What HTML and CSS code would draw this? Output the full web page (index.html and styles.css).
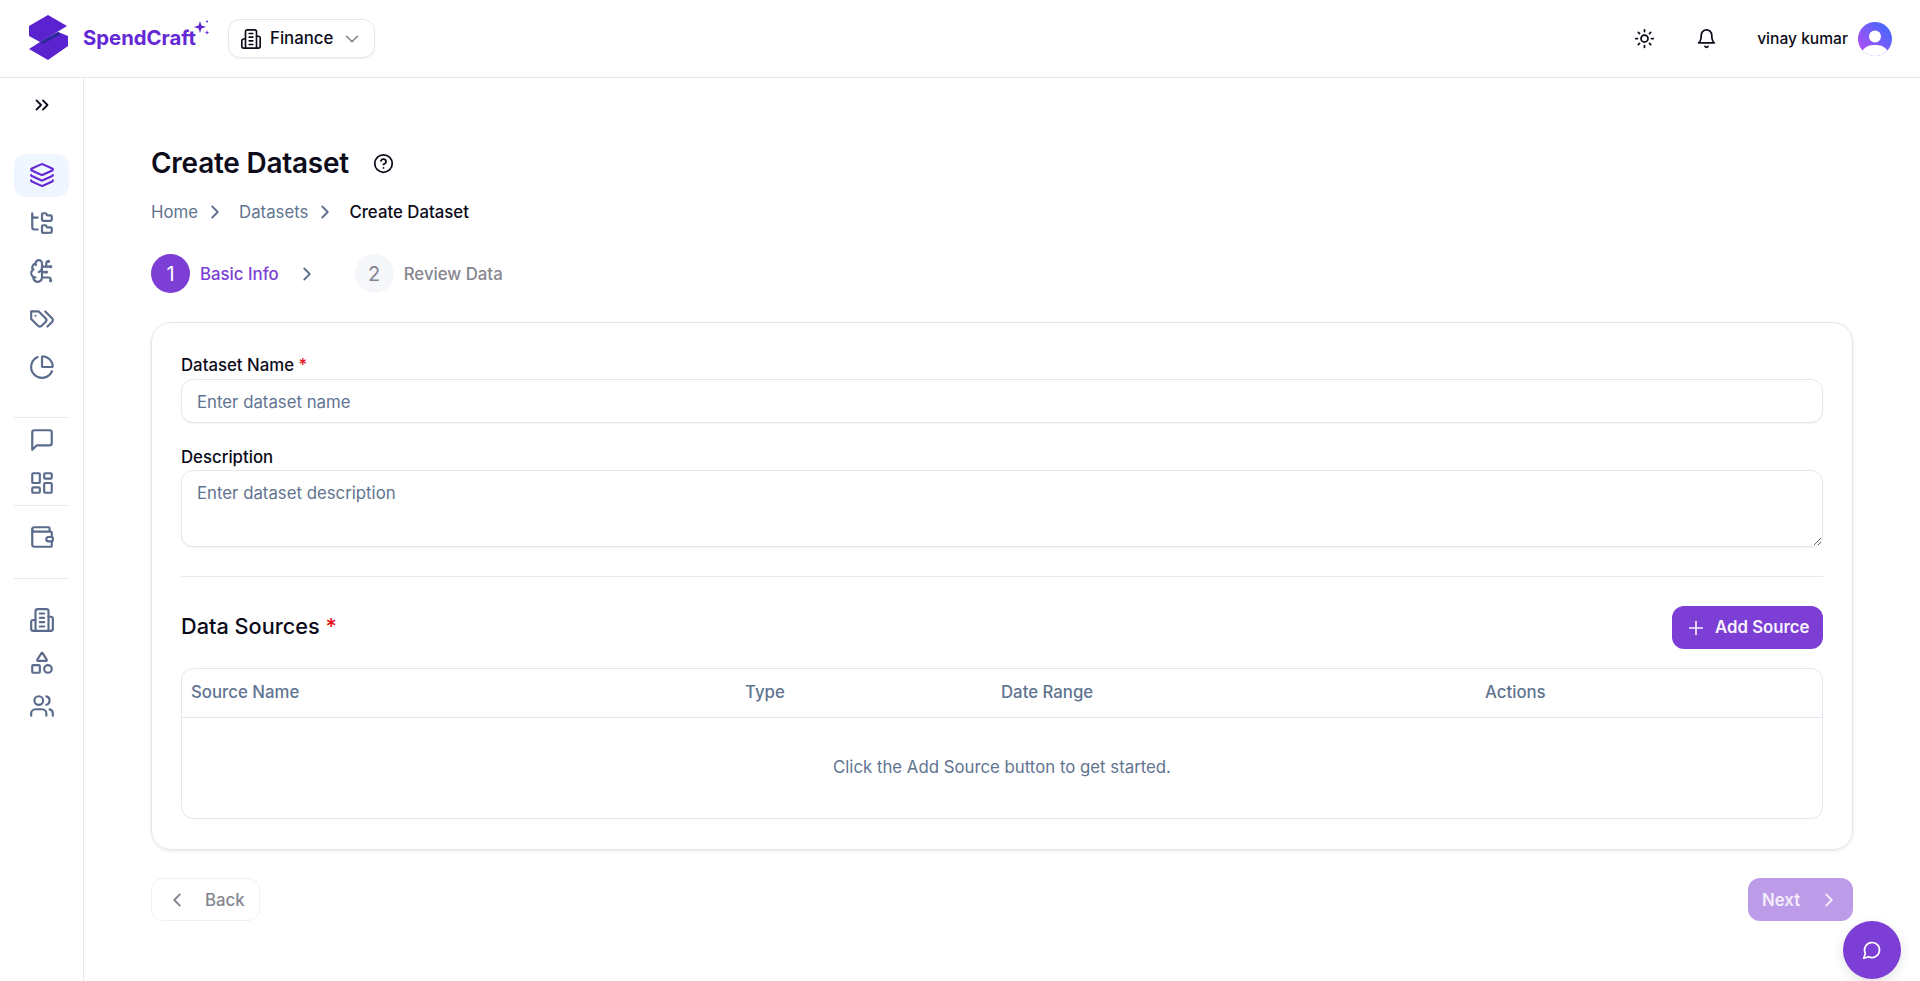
FILE: index.html
```html
<!DOCTYPE html>
<html lang="en">
<head>
<meta charset="utf-8">
<title>Create Dataset</title>
<link rel="stylesheet" href="styles.css">
</head>
<body>
<header class="topbar">
  <div class="brand">
    <svg class="logo" viewBox="0 0 44 50" width="44" height="50">
      <path fill="#5b22cf" d="M1 12 20 1 39 12 21 23 12 28 1 22Z"/>
      <path fill="#5b22cf" d="M40 22V32L20 46 1 35 12 28 30 18Z"/>
      <path fill="#2b2a9c" d="M12 28 30 18 33 20 15 30Z"/>
    </svg>
    <span class="brand-name">SpendCraft</span>
    <svg class="sparkle" viewBox="0 0 16 16" width="16" height="16">
      <path fill="#5b22cf" d="M6 1 7.400 5.600 12 7 7.400 8.400 6 13 4.600 8.400 0 7 4.600 5.600Z"/>
      <circle fill="#5b22cf" cx="13" cy="1.500" r="1"/>
      <path fill="#5b22cf" d="M13 10 13.600 12 15.500 12.500 13.600 13 13 15 12.400 13 10.500 12.500 12.400 12Z"/>
    </svg>
  </div>
  <button class="org-select">
    <svg class="ico-22 thin" viewBox="0 0 24 24"><path d="M6 22V4a2 2 0 0 1 2-2h8a2 2 0 0 1 2 2v18Z"/><path d="M6 12H4a2 2 0 0 0-2 2v6a2 2 0 0 0 2 2h2"/><path d="M18 9h2a2 2 0 0 1 2 2v9a2 2 0 0 1-2 2h-2"/><path d="M10 6h4M10 10h4M10 14h4M10 18h4"/></svg>
    <span class="org-name">Finance</span>
    <svg class="ico-22 org-caret" viewBox="0 0 24 24"><path d="m6 9 6 6 6-6"/></svg>
  </button>
  <div class="top-actions">
    <svg class="ico-21" viewBox="0 0 24 24"><circle cx="12" cy="12" r="4"/><path d="M12 2v2M12 20v2M4.930 4.930l1.410 1.410M17.660 17.660l1.410 1.410M2 12h2M20 12h2M6.340 17.660l-1.410 1.410M19.070 4.930l-1.410 1.410"/></svg>
    <svg class="ico-21 action-bell" viewBox="0 0 24 24"><path d="M6 8a6 6 0 0 1 12 0c0 7 3 9 3 9H3s3-2 3-9"/><path d="M10.300 21a1.940 1.940 0 0 0 3.400 0"/></svg>
    <span class="user-name">vinay kumar</span>
    <span class="avatar">
      <svg viewBox="0 0 34 34" width="34" height="34">
        <defs><linearGradient id="av" x1="0" y1="1" x2="1" y2="0"><stop offset="0.15" stop-color="#ab4ff5"/><stop offset="0.8" stop-color="#4f66fb"/></linearGradient></defs>
        <circle cx="17" cy="17" r="17" fill="url(#av)"/>
        <circle cx="17" cy="14.500" r="6" fill="#fff"/>
        <path fill="#fff" d="M4.500 28.500C8 24 12 23 17 23s9 1 12.500 5.500A17 17 0 0 1 17 34 17 17 0 0 1 4.500 28.500Z"/>
      </svg>
    </span>
  </div>
</header>

<div class="shell">
  <nav class="sidebar">
    <div class="expand">
      <svg class="ico-22 dark" viewBox="0 0 24 24"><path d="m6 17 5-5-5-5M13 17l5-5-5-5"/></svg>
    </div>
    <div class="nav-group group-main">
      <a class="nav-item active"><svg class="ico-26" viewBox="0 0 24 24"><path d="M12.830 2.180a2 2 0 0 0-1.660 0L2.600 6.080a1 1 0 0 0 0 1.830l8.580 3.910a2 2 0 0 0 1.660 0l8.580-3.900a1 1 0 0 0 0-1.830z"/><path d="M2 12a1 1 0 0 0 .580.910l8.600 3.910a2 2 0 0 0 1.650 0l8.580-3.900A1 1 0 0 0 22 12"/><path d="M2 17a1 1 0 0 0 .580.910l8.600 3.910a2 2 0 0 0 1.650 0l8.580-3.900A1 1 0 0 0 22 17"/></svg></a>
      <a class="nav-item"><svg class="ico-26" viewBox="0 0 24 24"><path d="M20 10a1 1 0 0 0 1-1V6a1 1 0 0 0-1-1h-2.500a1 1 0 0 1-.800-.400l-.900-1.200A1 1 0 0 0 15 3h-2a1 1 0 0 0-1 1v5a1 1 0 0 0 1 1Z"/><path d="M20 21a1 1 0 0 0 1-1v-3a1 1 0 0 0-1-1h-2.900a1 1 0 0 1-.880-.550l-.420-.850a1 1 0 0 0-.880-.550H13a1 1 0 0 0-1 1v5a1 1 0 0 0 1 1Z"/><path d="M3 5a2 2 0 0 0 2 2h3"/><path d="M3 3v13a2 2 0 0 0 2 2h3"/></svg></a>
      <a class="nav-item"><svg class="ico-26" viewBox="0 0 24 24"><path d="M12 5a3 3 0 1 0-5.997.125 4 4 0 0 0-2.526 5.770 4 4 0 0 0 .556 6.588A4 4 0 1 0 12 18Z"/><path d="M9 13a4.500 4.500 0 0 0 3-4"/><path d="M6.003 5.125A3 3 0 0 0 6.401 6.500"/><path d="M3.477 10.896a4 4 0 0 1 .585-.396"/><path d="M6 18a4 4 0 0 1-1.967-.516"/><path d="M12 13h4"/><path d="M12 18h6a2 2 0 0 1 2 2v1"/><path d="M12 8h8"/><path d="M16 8V5a2 2 0 0 1 2-2"/><circle cx="16" cy="13" r=".5"/><circle cx="18" cy="3" r=".5"/><circle cx="20" cy="21" r=".5"/><circle cx="20" cy="8" r=".5"/></svg></a>
      <a class="nav-item"><svg class="ico-26" viewBox="0 0 24 24"><path d="M9 5H2v7l6.290 6.290c.940.940 2.480.940 3.420 0l3.580-3.580c.940-.940.940-2.480 0-3.420L9 5Z"/><path d="M6 9.010V9"/><path d="m15 5 6.300 6.300a2.400 2.400 0 0 1 0 3.400L17 19"/></svg></a>
      <a class="nav-item"><svg class="ico-26" viewBox="0 0 24 24"><path d="M21 12c.552 0 1.005-.449.950-.998a10 10 0 0 0-8.953-8.951c-.550-.055-.998.398-.998.950v8a1 1 0 0 0 1 1z"/><path d="M21.210 15.890A10 10 0 1 1 8 2.830"/></svg></a>
    </div>
    <div class="nav-rule rule-a"></div>
    <div class="nav-group">
      <a class="nav-item"><svg class="ico-26" viewBox="0 0 24 24"><path d="M21 15a2 2 0 0 1-2 2H7l-4 4V5a2 2 0 0 1 2-2h14a2 2 0 0 1 2 2z"/></svg></a>
      <a class="nav-item"><svg class="ico-26" viewBox="0 0 24 24"><rect x="3" y="3" width="7" height="9" rx="1"/><rect x="14" y="3" width="7" height="5" rx="1"/><rect x="14" y="12" width="7" height="9" rx="1"/><rect x="3" y="16" width="7" height="5" rx="1"/></svg></a>
    </div>
    <div class="nav-rule rule-b"></div>
    <div class="nav-group">
      <a class="nav-item"><svg class="ico-26" viewBox="0 0 24 24"><path d="M19 7V4a1 1 0 0 0-1-1H5a2 2 0 0 0 0 4h15a1 1 0 0 1 1 1v4h-3a2 2 0 0 0 0 4h3a1 1 0 0 0 1-1v-2a1 1 0 0 0-1-1"/><path d="M3 5v14a2 2 0 0 0 2 2h15a1 1 0 0 0 1-1v-4"/></svg></a>
    </div>
    <div class="nav-rule rule-c"></div>
    <div class="nav-group">
      <a class="nav-item"><svg class="ico-26" viewBox="0 0 24 24"><path d="M6 22V4a2 2 0 0 1 2-2h8a2 2 0 0 1 2 2v18Z"/><path d="M6 12H4a2 2 0 0 0-2 2v6a2 2 0 0 0 2 2h2"/><path d="M18 9h2a2 2 0 0 1 2 2v9a2 2 0 0 1-2 2h-2"/><path d="M10 6h4M10 10h4M10 14h4M10 18h4"/></svg></a>
      <a class="nav-item"><svg class="ico-26" viewBox="0 0 24 24"><path d="M8.300 10a.7.7 0 0 1-.626-1.079L11.400 3a.7.7 0 0 1 1.198-.043L16.300 8.900a.7.7 0 0 1-.572 1.100Z"/><rect x="3" y="14" width="7" height="7" rx="1"/><circle cx="17.500" cy="17.500" r="3.500"/></svg></a>
      <a class="nav-item"><svg class="ico-26" viewBox="0 0 24 24"><path d="M16 21v-2a4 4 0 0 0-4-4H6a4 4 0 0 0-4 4v2"/><circle cx="9" cy="7" r="4"/><path d="M22 21v-2a4 4 0 0 0-3-3.870M16 3.130a4 4 0 0 1 0 7.750"/></svg></a>
    </div>
  </nav>

  <main class="content">
    <div class="title-row">
      <h1 class="page-title">Create Dataset</h1>
      <svg class="ico-21 dark" viewBox="0 0 24 24"><circle cx="12" cy="12" r="10"/><path d="M9.090 9a3 3 0 0 1 5.830 1c0 2-3 3-3 3"/><path d="M12 17h.01"/></svg>
    </div>
    <div class="crumbs">
      <span class="crumb">Home</span>
      <svg class="ico-22 slate" viewBox="0 0 24 24"><path d="m9 18 6-6-6-6"/></svg>
      <span class="crumb">Datasets</span>
      <svg class="ico-22 slate" viewBox="0 0 24 24"><path d="m9 18 6-6-6-6"/></svg>
      <span class="crumb current">Create Dataset</span>
    </div>
    <div class="steps">
      <span class="step-dot on">1</span>
      <span class="step-label on">Basic Info</span>
      <svg class="ico-22 slate step-sep" viewBox="0 0 24 24"><path d="m9 18 6-6-6-6"/></svg>
      <span class="step-dot">2</span>
      <span class="step-label">Review Data</span>
    </div>

    <section class="card">
      <label class="field-label">Dataset Name <span class="req">*</span></label>
      <input class="field-input" type="text" placeholder="Enter dataset name">
      <label class="field-label second">Description</label>
      <textarea class="field-area" placeholder="Enter dataset description"></textarea>
      <hr class="card-rule">
      <div class="source-head">
        <h2 class="source-title">Data Sources <span class="req">*</span></h2>
        <button class="add-btn">
          <svg class="ico-22 thin" viewBox="0 0 24 24"><path d="M5 12h14M12 5v14"/></svg>
          <span class="add-label">Add Source</span>
        </button>
      </div>
      <div class="table">
        <div class="table-head">
          <span>Source Name</span><span>Type</span><span>Date Range</span><span>Actions</span>
        </div>
        <div class="table-empty">Click the Add Source button to get started.</div>
      </div>
    </section>

    <div class="footer-row">
      <button class="back-btn">
        <svg class="ico-22" viewBox="0 0 24 24"><path d="m15 18-6-6 6-6"/></svg>
        Back
      </button>
      <button class="next-btn">
        Next
        <svg class="ico-22" viewBox="0 0 24 24"><path d="m9 18 6-6-6-6"/></svg>
      </button>
    </div>
  </main>
</div>

<button class="chat-fab">
  <svg class="ico-20" viewBox="0 0 24 24"><path d="M7.900 20A9 9 0 1 0 4 16.100L2 22Z"/></svg>
</button>
</body>
</html>
```
FILE: styles.css
```css
* { box-sizing: border-box; }
html, body { margin: 0; height: 100%; }
body {
  font-family: Inter, "Liberation Sans", sans-serif;
  color: #0b0b1a;
  background: #fff;
  overflow: hidden;
}
svg { display: block; flex: none; }
.ico-20, .ico-21, .ico-22, .ico-26 {
  fill: none;
  stroke: currentColor;
  stroke-width: 2;
  stroke-linecap: round;
  stroke-linejoin: round;
}
.ico-20 { width: 20px; height: 20px; }
.ico-21 { width: 21px; height: 21px; }
.ico-22 { width: 22px; height: 22px; }
.ico-26 { width: 26px; height: 26px; }
.thin { stroke-width: 1.800; }
.dark { color: #0b0b1a; }
.slate { color: #5f6f8c; }

.topbar {
  height: 78px;
  border-bottom: 1px solid #e5e7ef;
  display: flex;
  align-items: center;
  padding: 0 28px 0 29px;
}
.brand { display: flex; align-items: center; width: 199px; position: relative; }
.logo { margin: 1px 0 0 -1px; }
.brand-name {
  margin: 0 0 2px 11px;
  font-size: 20.300px;
  font-weight: 700;
  color: #6428d4;
}
.sparkle { position: absolute; left: 165px; top: 7px; }
.org-select {
  font: inherit;
  height: 39px;
  width: 147px;
  background: #fff;
  border: 1px solid #e2e8f0;
  border-radius: 12px;
  box-shadow: 0 1px 2px rgba(15, 23, 42, .05);
  display: flex;
  align-items: center;
  padding: 0 0 0 11px;
  color: #0b0b1a;
}
.org-name { margin: 0 0 2px 8px; font-size: 16.800px; font-weight: 500; }
.org-caret { margin-left: auto; margin-right: 11px; color: #7b7f8c; stroke-width: 1.600; }
.top-actions { margin-left: auto; display: flex; align-items: center; }
.user-name { margin-left: 40px; font-size: 15.600px; font-weight: 500; }
.action-bell { margin-left: 41px; }
.avatar { margin-left: 10px; }

.shell { display: flex; height: calc(100% - 78px); }
.sidebar {
  width: 84px;
  flex: none;
  border-right: 1px solid #e5e7ef;
  display: flex;
  flex-direction: column;
  padding: 0 14px;
  color: #5a6b8c;
}
.expand { height: 54px; display: flex; align-items: center; justify-content: center; }
.nav-group { display: flex; flex-direction: column; }
.group-main { margin-top: 22px; gap: 5px; }
.nav-item {
  height: 43px;
  padding-bottom: 2px;
  border-radius: 12px;
  display: flex;
  align-items: center;
  justify-content: center;
  color: inherit;
}
.nav-item.active { background: #eff6ff; color: #6428d4; }
.nav-rule { height: 1px; background: #e5e9f0; }
.rule-a { margin: 28px 0 1px; }
.rule-b { margin: 0 0 10px; }
.rule-c { margin: 19px 0 20px; }

.content { flex: 1; padding: 69px 67px 0; min-width: 0; }
.title-row { display: flex; align-items: center; gap: 24px; height: 32px; }
.page-title { margin: 0; font-size: 27.900px; font-weight: 600; letter-spacing: -0.2px; }
.crumbs { display: flex; align-items: center; margin-top: 21px; height: 24px; font-size: 16.800px; }
.crumb { color: #5f7490; }
.crumb.current { color: #0b0b1a; font-weight: 500; }
.crumbs .ico-22 { margin: 0 13px 0 6px; }
.steps { display: flex; align-items: center; margin-top: 30px; height: 39px; font-size: 16.800px; }
.step-dot {
  width: 39px;
  height: 39px;
  border-radius: 50%;
  background: #f5f7fa;
  color: #7f8494;
  font-size: 20px;
  display: flex;
  align-items: center;
  justify-content: center;
}
.step-dot.on { background: #7c3ed4; color: #fff; }
.step-label { margin-left: 10px; color: #85868f; font-weight: 500; }
.step-label.on { color: #7c3ed4; }
.step-sep { margin: 0 37px 0 17px; }

.card {
  margin-top: 29px;
  height: 528px;
  border: 1px solid #e2e8f0;
  border-radius: 20px;
  box-shadow: 0 1px 3px rgba(15, 23, 42, .1);
  padding: 32px 29px 0;
}
.field-label { display: block; height: 20px; font-size: 16.800px; font-weight: 500; line-height: 20px; }
.field-label.second { margin-top: 24px; }
.req { color: #e5121c; }
.field-input, .field-area {
  display: block;
  width: 100%;
  font: inherit;
  font-size: 16.800px;
  color: #0b0b1a;
  border: 1px solid #e2e8f0;
  border-radius: 12px;
  background: #fff;
  box-shadow: 0 1px 2px rgba(15, 23, 42, .05);
  padding: 0 15px;
  outline: none;
}
.field-input::placeholder, .field-area::placeholder { color: #5f7490; opacity: 1; }
.field-input { height: 44px; margin-top: 4px; padding-top: 2px; }
.field-area { height: 77px; margin-top: 3px; padding-top: 12px; line-height: 20px; }
.card-rule { border: 0; height: 1px; background: #e5e9f0; margin: 29px 0 0; }
.source-head { display: flex; align-items: center; justify-content: space-between; margin-top: 29px; height: 43px; }
.source-title { margin: 0 0 3px; font-size: 21.700px; font-weight: 500; }
.add-btn {
  font: inherit;
  font-size: 16.800px;
  font-weight: 600;
  height: 43px;
  width: 151px;
  border: 0;
  border-radius: 12px;
  background: #7c3ed4;
  color: #f6f2fd;
  display: flex;
  align-items: center;
  padding: 0 0 0 13px;
  gap: 8px;
}
.add-label { margin-bottom: 2px; }
.table { margin-top: 19px; height: 151px; border: 1px solid #e2e8f0; border-radius: 12px; }
.table-head {
  height: 49px;
  padding-bottom: 2px;
  border-bottom: 1px solid #e2e8f0;
  display: grid;
  grid-template-columns: 554px 256px 484px 1fr;
  align-items: center;
  padding-left: 9px;
  font-size: 16.800px;
  font-weight: 500;
  color: #5f7490;
}
.table-empty {
  height: 100px;
  padding-bottom: 3px;
  display: flex;
  align-items: center;
  justify-content: center;
  font-size: 16.800px;
  color: #5f7490;
}
.footer-row { display: flex; justify-content: space-between; margin-top: 28px; }
.back-btn, .next-btn {
  font: inherit;
  font-size: 16.800px;
  height: 43px;
  border-radius: 12px;
  display: flex;
  align-items: center;
}
.back-btn {
  width: 109px;
  background: #fff;
  border: 1px solid #eef0f4;
  color: #85868f;
  font-weight: 500;
  padding: 0 0 0 14px;
  gap: 17px;
}
.next-btn {
  width: 105px;
  border: 0;
  background: #bc9ce9;
  color: #f3edfc;
  font-weight: 600;
  padding: 0 0 0 14px;
  gap: 18px;
}
.chat-fab {
  position: absolute;
  left: 1843px;
  top: 921px;
  width: 58px;
  height: 58px;
  border: 0;
  border-radius: 50%;
  background: #7c3ed4;
  color: #fff;
  box-shadow: 0 4px 12px rgba(15, 23, 42, .12);
  display: flex;
  align-items: center;
  justify-content: center;
}
```
